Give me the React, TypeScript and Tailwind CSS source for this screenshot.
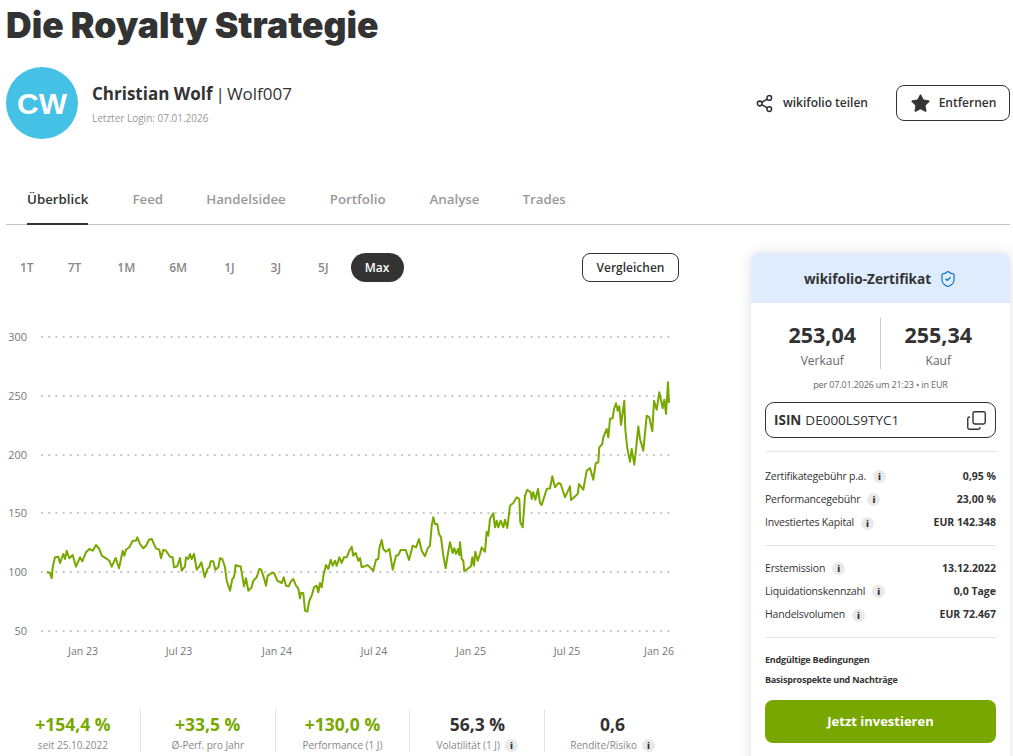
import { Copy, Share2, ShieldCheck, Star } from "lucide-react";

// traced from the reference, in px: [originX, originY, pairs at 3x]
const part1 = [140,280,150,282,155,298,158,265,165,235,175,233,180,252,190,225,195,240,200,215,208,238,218,228,228,263,240,235,247,247,258,220,268,210,278,215,288,198,298,210,305,230,318,238,328,245,335,263,347,237,357,268,368,215,373,230,378,212,388,205,398,185,408,185,412,175,420,195,430,208,438,200,447,182,455,180,468,208,478,212,483,238,490,212,498,215,510,233,518,235,522,265,532,262,540,237,545,275,555,262,558,235,565,240,570,225,575,240,582,225,590,272,598,262,604,250,614,295,622,270,628,265,632,247,640,247,646,272,655,265,660,238,667,240,675,265,680,305,690,335,697,300,702,295,707,258,715,262,722,262,732,322,738,298,745,335,755,325,760,305,770,295,778,270,784,272,792,298,798,320,803,290,815,282,822,282,832,305,845,312,851,295,858,320,866,322,872,308,880,300,888,320,895,328,900,358,903,342,910,342,915,395,922,398,928,365,935,350,942,325,950,320,955,340,960,312,965,325,970,292,978,258,985,270,992,242,998,260,1005,245,1010,260,1018,235];
const part2 = [0,240,5,252,12,235,20,235,28,215,35,203,40,230,47,222,55,245,60,237,65,265,75,262,82,258,90,265,100,275,108,242,115,240,118,208,125,183,130,210,138,218,148,210,158,272,168,230,175,228,182,213,197,213,207,243,218,200,228,205,237,180,245,215,255,232,263,208,270,200,275,140,280,115,285,135,292,135,297,165,303,175,310,230,317,268,322,235,330,190,338,222,343,208,348,225,354,210,358,228,360,190,365,240,370,245,373,277,385,268,393,262,397,235,402,260,406,218,413,245,420,225,425,205,435,218,440,158,445,170,450,120,460,103,465,145,470,125,475,145,482,125,490,145,495,122,502,147,510,80,520,72,530,55,538,60,541,130,548,145,555,50,562,32,572,40,575,60,580,40,586,62,594,30,600,72];
const part3 = [5,408,20,360,30,358,37,322,45,355,55,342,62,345,75,385,90,352,93,393,113,375,117,345,130,362,140,305,150,297,160,332,167,283,175,280,178,235,187,225,190,205,200,180,205,205,210,150,218,147,222,120,228,103,233,125,238,112,243,168,253,95,256,180,262,238,270,278,275,240,283,287,287,250,295,172,300,210,310,245,320,140,328,145,337,187,342,95,350,122,358,70,368,118,373,92,378,135,384,40,387,102];

function toPts(arr: number[], ox: number, oy: number) {
  const out: string[] = [];
  for (let i = 0; i < arr.length; i += 2) {
    out.push(`${(ox + arr[i] / 3).toFixed(1)},${(oy + arr[i + 1] / 3).toFixed(1)}`);
  }
  return out;
}
const linePts = [...toPts(part1, 0, 480), ...toPts(part2, 340, 480), ...toPts(part3, 540, 370)].join(" ");

const gridY = [
  { y: 338, label: "300" },
  { y: 397, label: "250" },
  { y: 456, label: "200" },
  { y: 514, label: "150" },
  { y: 573, label: "100" },
  { y: 632, label: "50" },
];
const xLabels = [
  { x: 83, label: "Jan 23" },
  { x: 179, label: "Jul 23" },
  { x: 277, label: "Jan 24" },
  { x: 374, label: "Jul 24" },
  { x: 471, label: "Jan 25" },
  { x: 567, label: "Jul 25" },
  { x: 659, label: "Jan 26" },
];

function Info() {
  return (
    <span className="inline-flex h-[13px] w-[13px] items-center justify-center rounded-full bg-[#e9e9e9] text-[9px] leading-none font-extrabold tracking-normal text-[#333]">
      i
    </span>
  );
}

function Row({ label, value }: { label: string; value: string }) {
  return (
    <div className="flex h-[23.3px] items-center justify-between text-[10.5px]">
      <span className="flex items-center gap-[7px] tracking-[-0.2px] text-[#333]">
        {label} <Info />
      </span>
      <span className="font-bold text-[#333]">{value}</span>
    </div>
  );
}

function Stat({ value, label, green, info, last }: { value: string; label: string; green?: boolean; info?: boolean; last?: boolean }) {
  return (
    <div className={`flex h-[43px] flex-col items-center pt-[3px] ${last ? "" : "border-r border-[#e3e3e3]"}`}>
      <div className={`text-[17.5px] leading-[24px] font-bold ${green ? "text-[#78a800]" : "text-[#333]"}`}>{value}</div>
      <div className="mt-[2px] flex items-center gap-[5px] text-[10px] leading-[14px] text-[#888]">
        {label} {info && <Info />}
      </div>
    </div>
  );
}

export default function App() {
  return (
    <div className="h-[756px] w-[1013px] overflow-hidden bg-white pl-[6px] font-['Open_Sans',sans-serif] text-[#333]">
      <h1 className="h-[52px] font-['Inter',sans-serif] text-[35.5px] leading-[52px] font-black">Die Royalty Strategie</h1>

      <div className="mt-[15px] flex h-[72px] w-[1004px] items-center">
        <div className="flex h-[72px] w-[72px] items-center justify-center rounded-full bg-[#45c1e6] font-['Liberation_Sans',sans-serif] text-[30px] font-bold text-white">
          CW
        </div>
        <div className="ml-[14px]">
          <div className="text-[17px] leading-[24px]">
            <span className="font-bold">Christian Wolf</span>
            <span className="ml-[3px]">|</span>
            <span className="ml-[2px]">Wolf007</span>
          </div>
          <div className="mt-[5px] text-[10px] leading-[14px] text-[#999]">Letzter Login: 07.01.2026</div>
        </div>
        <div className="ml-auto flex items-center">
          <Share2 size={19} strokeWidth={1.9} className="text-[#333]" />
          <span className="ml-[9px] text-[12px] font-semibold">wikifolio teilen</span>
          <button className="ml-[28px] flex h-[36px] w-[114px] items-center justify-center gap-[8px] rounded-[8px] border border-[#333] text-[12px] font-semibold">
            <Star size={21} fill="#333" strokeWidth={1} />
            Entfernen
          </button>
        </div>
      </div>

      <div className="mt-[38px] flex h-[48px] w-[1004px] border-b border-[#c4c4c4] pl-[21px] text-[13.3px] font-semibold text-[#999]">
        <div className="flex h-[48px] items-center border-b-2 border-[#333] text-[#333]">Überblick</div>
        <div className="ml-[44px] flex h-[47px] items-center pb-[2px]">Feed</div>
        <div className="ml-[43px] flex h-[47px] items-center pb-[2px]">Handelsidee</div>
        <div className="ml-[44px] flex h-[47px] items-center pb-[2px]">Portfolio</div>
        <div className="ml-[44px] flex h-[47px] items-center pb-[2px]">Analyse</div>
        <div className="ml-[43px] flex h-[47px] items-center pb-[2px]">Trades</div>
      </div>

      <div className="mt-[28px] flex w-[1004px] justify-between">
        <div className="w-[674px]">
          <div className="flex h-[29px] items-center text-[12px] font-semibold text-[#888]">
            <span className="ml-[14px]">1T</span>
            <span className="ml-[34px]">7T</span>
            <span className="ml-[36px]">1M</span>
            <span className="ml-[34px]">6M</span>
            <span className="ml-[37px]">1J</span>
            <span className="ml-[36px]">3J</span>
            <span className="ml-[37px]">5J</span>
            <span className="ml-[22px] flex h-[29px] w-[53px] items-center justify-center rounded-full bg-[#333] text-white">Max</span>
            <button className="mr-[1px] ml-auto flex h-[29px] w-[97px] items-center justify-center rounded-[8px] border border-[#333] text-[#333]">Vergleichen</button>
          </div>

          <svg viewBox="6 310 674 355" className="mt-[27px] block h-[355px] w-[674px]">
            {gridY.map((g) => (
              <g key={g.y}>
                <line x1="41" x2="674" y1={g.y} y2={g.y} stroke="#c8c8c8" strokeWidth="2" strokeDasharray="2 5.2" />
                <text x="27" y={g.y + 4} textAnchor="end" fontSize="11" fill="#777">{g.label}</text>
              </g>
            ))}
            {xLabels.map((l) => (
              <text key={l.label} x={l.x} y="656" textAnchor="middle" fontSize="10.5" fill="#777">{l.label}</text>
            ))}
            <polyline points={linePts} fill="none" stroke="#78a800" strokeWidth="2" strokeLinejoin="round" />
          </svg>

          <div className="mt-[45px] grid grid-cols-5">
            <Stat value="+154,4 %" label="seit 25.10.2022" green />
            <Stat value="+33,5 %" label="Ø-Perf. pro Jahr" green />
            <Stat value="+130,0 %" label="Performance (1 J)" green />
            <Stat value="56,3 %" label="Volatilität (1 J)" info />
            <Stat value="0,6" label="Rendite/Risiko" info last />
          </div>
        </div>

        <div className="h-[520px] w-[259px] rounded-t-[8px] bg-white shadow-[0_0_14px_rgba(0,0,0,0.13)]">
          <div className="flex h-[50px] items-center justify-center gap-[8px] rounded-t-[8px] bg-[#dfecfd] pt-[2px] text-[13.6px] font-bold">
            wikifolio-Zertifikat
            <ShieldCheck size={18} strokeWidth={1.5} className="text-[#0a6fc2]" />
          </div>
          <div className="px-[14px]">
            <div className="mt-[15px] flex h-[51px]">
              <div className="flex w-[115.5px] flex-col items-center border-r border-[#c9c9c9]">
                <div className="mt-[2px] text-[21.5px] leading-[30px] font-bold">253,04</div>
                <div className="mt-[1px] text-[12px] leading-[20px] text-[#666]">Verkauf</div>
              </div>
              <div className="flex flex-1 flex-col items-center">
                <div className="mt-[2px] text-[21.5px] leading-[30px] font-bold">255,34</div>
                <div className="mt-[1px] text-[12px] leading-[20px] text-[#666]">Kauf</div>
              </div>
            </div>
            <div className="mt-[9px] text-center text-[9px] leading-[14px] tracking-[-0.15px] text-[#666]">per 07.01.2026 um 21:23 • in EUR</div>
            <div className="mt-[10px] flex h-[36px] items-center rounded-[9px] border border-[#333] pr-[8px] pl-[8px] text-[13.5px]">
              <span className="font-bold">ISIN</span>
              <span className="ml-[4px]">DE000LS9TYC1</span>
              <Copy size={21} strokeWidth={1.6} className="ml-auto -scale-y-100" />
            </div>
            <div className="mt-[13px] border-t border-[#e4e4e4] pt-[13px]">
              <Row label="Zertifikategebühr p.a." value="0,95 %" />
              <Row label="Performancegebühr" value="23,00 %" />
              <Row label="Investiertes Kapital" value="EUR 142.348" />
            </div>
            <div className="mt-[10px] border-t border-[#e4e4e4] pt-[11px]">
              <Row label="Erstemission" value="13.12.2022" />
              <Row label="Liquidationskennzahl" value="0,0 Tage" />
              <Row label="Handelsvolumen" value="EUR 72.467" />
            </div>
            <div className="mt-[10px] border-t border-[#e4e4e4] pt-[12px] text-[9px] font-bold tracking-[-0.2px]">
              <div className="h-[20px] leading-[20px]">Endgültige Bedingungen</div>
              <div className="h-[20px] leading-[20px]">Basisprospekte und Nachträge</div>
            </div>
            <button className="mt-[10px] h-[43px] w-full rounded-[8px] bg-[#78a800] pt-[1px] text-[13px] font-bold text-white">Jetzt investieren</button>
          </div>
        </div>
      </div>
    </div>
  );
}
